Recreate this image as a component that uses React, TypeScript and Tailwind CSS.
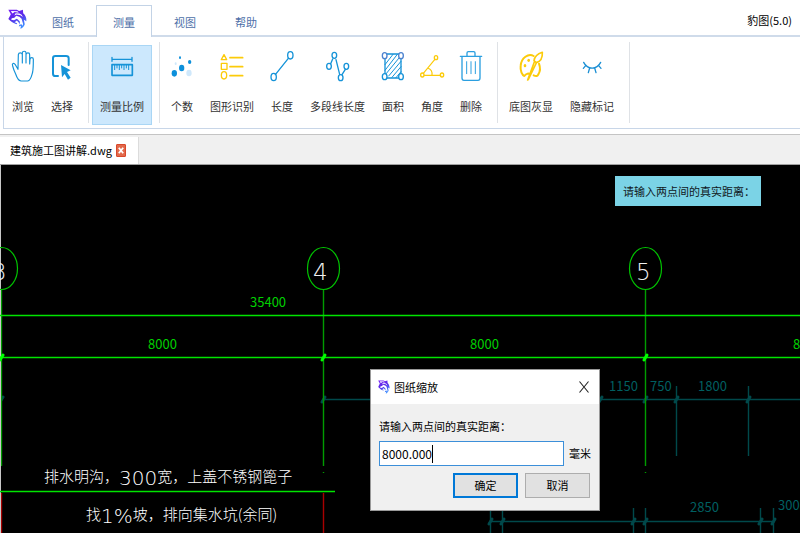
import { useState } from "react";
import type { ReactNode } from "react";

const BLUE = "#1593d8";
const YELLOW = "#fccb0a";

function Logo({ className }: { className: string }) {
  return (
    <svg viewBox="0 0 60 62" className={className} preserveAspectRatio="none" aria-hidden="true">
      <defs>
        <linearGradient id="fur" x1="0" y1="0" x2="0.4" y2="1">
          <stop offset="0" stopColor="#7a1cf5" />
          <stop offset="0.5" stopColor="#5a2be8" />
          <stop offset="1" stopColor="#3f8cff" />
        </linearGradient>
      </defs>
      <path
        fill="url(#fur)"
        fillRule="evenodd"
        d="M1 2 H28 L35 6 L47 2 L48 13 C55 19 59 27 58 38 L50 33 L53 47 C50 55 45 59 39 61 L41 52 L34 54 L36 49 L43 47 L45 52 C48 49 48 45 46 41 L43 30 L36 24 L26 21 L20 27 L12 29 L10 33 L19 35 L28 30 L37 38 L38 47 L33 41 L28 36 L21 41 L29 44 L27 47 L16 43 L9 38 L1 31 L9 16 Z M9 6 L14 14 L21 9 L34 12 L30 7 Z M24 13 L20 20 L27 17 L39 19 L47 25 L43 18 L36 14 Z"
      />
    </svg>
  );
}

function Icon({ children, stroke = BLUE }: { children: ReactNode; stroke?: string }) {
  return (
    <svg
      viewBox="0 0 84 108"
      className="-mx-1 h-9 w-7 shrink-0"
      fill="none"
      stroke={stroke}
      strokeWidth="4"
      strokeLinecap="round"
      strokeLinejoin="round"
      aria-hidden="true"
    >
      {children}
    </svg>
  );
}

const handIcon = (
  <Icon>
    <path
      d="M27 64 L19 50 C14 43 8 47 11 54 C14 66 17 72 20 78 C24 90 28 98 36 99 H56 C66 97 68 82 71 72 C73 62 73 50 73 34 C73 27 64 27 63 34 L62 48 V20 C62 13 52 13 51 20 V45 M51 20 V15 C51 8 40 8 40 15 V45 M40 20 C39 13 29 13 28 20 L27 64"
      strokeWidth="3.5"
    />
  </Icon>
);
const selectIcon = (
  <Icon>
    <path d="M30 84 H22 C17 84 15 81 15 77 V31 C15 26 17 24 22 24 H54 C59 24 62 26 62 31 V51" strokeWidth="6" />
    <path d="M39 51 L68 67 L57 72 L68 89 L60 95 L50 78 L42 88 Z" fill={BLUE} stroke="none" />
  </Icon>
);
const scaleIcon = (
  <Icon>
    <path d="M12 28 V40 M72 28 V40 M12 34 H72" strokeWidth="4" />
    <rect x="12" y="50" width="61" height="32" strokeWidth="5" />
    <path d="M20 51 V66 M27 51 V61 M34 51 V66 M41 51 V61 M48 51 V66 M55 51 V61 M62 51 V66" strokeWidth="3" strokeLinecap="butt" />
  </Icon>
);
const countIcon = (
  <Icon>
    <g stroke="none" fill="#0d90db">
      <ellipse cx="19" cy="76" rx="8" ry="10" />
      <ellipse cx="41" cy="60" rx="8" ry="10" />
      <ellipse cx="65" cy="42" rx="5" ry="6" />
      <ellipse cx="36" cy="29" rx="3" ry="4" />
      <ellipse cx="63" cy="75" rx="8" ry="10" fill="#cfe8fb" />
      <ellipse cx="23" cy="47" rx="3" ry="4" fill="#cfe8fb" />
    </g>
  </Icon>
);
const shapesIcon = (
  <Icon stroke={YELLOW}>
    <path d="M18 20 L26 35 H10 Z" strokeWidth="4" />
    <rect x="10" y="46" width="17" height="18" strokeWidth="4" />
    <ellipse cx="18" cy="82" rx="8" ry="11" strokeWidth="4" />
    <path d="M36 29 H74 M36 56 H74 M36 83 H74" strokeWidth="5" />
  </Icon>
);
const lengthIcon = (
  <Icon>
    <path d="M22 80 L61 31" />
    <ellipse cx="17" cy="87" rx="8" ry="11" />
    <ellipse cx="67" cy="22" rx="8" ry="11" />
  </Icon>
);
const polylineIcon = (
  <Icon>
    <path d="M20 47 L26 33 M36 35 L47 79 M54 80 L64 64" />
    <ellipse cx="15" cy="55" rx="7" ry="9" />
    <ellipse cx="31" cy="22" rx="7" ry="9" />
    <ellipse cx="50" cy="89" rx="7" ry="9" />
    <ellipse cx="67" cy="55" rx="7" ry="9" />
  </Icon>
);
const areaIcon = (
  <Icon>
    <path d="M24 18 H60 M66 31 V78 M60 90 H24 M18 78 V31" strokeWidth="4" />
    <path d="M18 50 L42 19 M18 67 L55 19 M19 80 L65 24 M29 84 L66 40 M39 88 L66 56 M51 89 L66 71" strokeWidth="3" />
    <ellipse cx="17" cy="86" rx="7" ry="9" fill="white" />
    <ellipse cx="66" cy="86" rx="7" ry="9" fill="white" />
    <ellipse cx="17" cy="23" rx="7" ry="9" fill="white" stroke="#4c82cf" />
    <ellipse cx="66" cy="23" rx="7" ry="9" fill="white" stroke="#4c82cf" />
  </Icon>
);
const angleIcon = (
  <Icon stroke={YELLOW}>
    <path d="M16 76 L50 35 M19 82 H68 M31 61 C40 65 43 72 42 81" strokeWidth="3.5" />
    <ellipse cx="13" cy="81" rx="5" ry="6" />
    <ellipse cx="54" cy="29" rx="5" ry="6" />
    <ellipse cx="72" cy="81" rx="5" ry="6" />
  </Icon>
);
const deleteIcon = (
  <Icon stroke="#2b9fe0">
    <path d="M10 25 H74 M30 24 V15 C30 12 32 11 34 11 H50 C52 11 54 12 54 15 V24 M15 26 V90 C15 95 17 97 21 97 H63 C67 97 69 95 69 90 V26" />
    <path d="M29 41 V77 M42 41 V77 M55 41 V77" strokeWidth="3" />
  </Icon>
);
const paletteIcon = (
  <Icon stroke={YELLOW}>
    <path d="M50 24 C34 15 13 29 11 53 C9 70 16 82 22 84 C28 75 36 76 38 79 M50 82 C58 86 62 84 64 79 C70 70 70 58 66 47" strokeWidth="6" />
    <path d="M76 13 C61 18 53 24 51 38 L58 44 C72 40 77 30 76 13 Z" strokeWidth="5" />
    <path d="M52 42 L32 96 M58 45 L34 94" strokeWidth="5" />
    <g fill={YELLOW} stroke="none">
      <ellipse cx="35" cy="37" rx="4" ry="5" />
      <ellipse cx="24" cy="53" rx="4" ry="5" />
    </g>
  </Icon>
);
const hiddenIcon = (
  <Icon stroke="#1b8fd4">
    <path d="M17 43 C29 66 56 66 68 43 M23 53 L16 61 M35 60 L31 74 M50 60 L54 74 M62 53 L69 61" strokeWidth="4" />
  </Icon>
);

type Tool = { label: string; icon: ReactNode };
const groups: Tool[][] = [
  [
    { label: "浏览", icon: handIcon },
    { label: "选择", icon: selectIcon },
  ],
  [{ label: "测量比例", icon: scaleIcon }],
  [
    { label: "个数", icon: countIcon },
    { label: "图形识别", icon: shapesIcon },
    { label: "长度", icon: lengthIcon },
    { label: "多段线长度", icon: polylineIcon },
    { label: "面积", icon: areaIcon },
    { label: "角度", icon: angleIcon },
    { label: "删除", icon: deleteIcon },
  ],
  [
    { label: "底图灰显", icon: paletteIcon },
    { label: "隐藏标记", icon: hiddenIcon },
  ],
];

function ToolButton({ label, icon }: Tool) {
  const active = label === "测量比例";
  return (
    <button
      type="button"
      aria-pressed={active}
      className={`flex h-20 flex-col items-center px-2 pt-[3px] text-[#333] ${
        active ? "bg-[#cce8fd] outline outline-1 -outline-offset-1 outline-[#a9d6f5]" : ""
      }`}
    >
      {icon}
      <span className="mt-3.5 whitespace-nowrap leading-4">{label}</span>
    </button>
  );
}

function Tick({ x, y, color }: { x: number; y: number; color: string }) {
  return <path d={`M${x - 1} ${y + 3} L${x + 2} ${y - 2}`} stroke={color} strokeWidth="3" strokeLinecap="round" />;
}

function Drawing() {
  const teal = "#00494b";
  return (
    <svg className="absolute inset-0 h-full w-full" fill="none" aria-label="建筑施工图讲解">
      <g stroke={teal} strokeWidth="1.4">
        <line x1="324" y1="234.5" x2="100%" y2="234.5" />
        <line x1="490" y1="356.5" x2="775" y2="356.5" />
        <path d="M676.5 221 V291 M748.5 221 V291" />
        <path d="M490.5 343 V368 M502.5 343 V368 M633.5 343 V368 M645.5 343 V368 M760.5 343 V368 M773.5 343 V368" />
      </g>
      {[1, 323, 600, 645, 676, 748].map((x) => (
        <Tick key={x} x={x} y={234} color={teal} />
      ))}
      {[490, 502, 633, 645, 760, 773].map((x) => (
        <Tick key={x} x={x} y={356} color={teal} />
      ))}
      <g stroke="#009c00" strokeWidth="1.4">
        <path d="M1.5 125 V301 M323.5 125 V301 M645.5 125 V301" />
        <path d="M323.5 307 V310 M645.5 307 V310" strokeDasharray="1 2" />
      </g>
      <path d="M323.5 328 V368 M1.5 328 V368" stroke="#a80000" strokeWidth="1.4" />
      <rect width="1" height="100%" fill="#c8c8c8" />
      <g stroke="#00e400" strokeWidth="1.4">
        <line x1="0" y1="150.5" x2="100%" y2="150.5" />
        <line x1="0" y1="192.5" x2="100%" y2="192.5" />
        <line x1="0" y1="326.5" x2="335" y2="326.5" />
      </g>
      {[1, 323, 645].map((x) => (
        <g key={x}>
          <ellipse cx={x + 0.5} cy="103.5" rx="16" ry="21" stroke="#00c400" strokeWidth="1.2" />
          <Tick x={x} y={192} color="#00ff00" />
        </g>
      ))}
      <g fill="#00d000" className="font-['Noto_Sans_CJK_SC',sans-serif] text-[13px]">
        <text x="250" y="142">35400</text>
        <text x="148" y="184">8000</text>
        <text x="470" y="184">8000</text>
        <text x="793" y="184">8000</text>
      </g>
      <g fill="#005f61" className="font-['Noto_Sans_CJK_SC',sans-serif] text-[13px]">
        <text x="609" y="226">1150</text>
        <text x="650" y="226">750</text>
        <text x="698" y="226">1800</text>
        <text x="690" y="347">2850</text>
        <text x="778" y="345">300</text>
      </g>
      <g fill="#f0f0f0" className="font-['DejaVu_Sans','Noto_Sans_CJK_SC',sans-serif] text-[23px] font-extralight">
        <text x="-8" y="115">3</text>
        <text x="313" y="115">4</text>
        <text x="636" y="115">5</text>
      </g>
      <g fill="#ffffff" className="font-['Noto_Sans_CJK_SC',sans-serif] text-[15px] font-light">
        <text x="44" y="317">
          排水明沟，
          <tspan dy="3" className="font-['DejaVu_Sans',sans-serif] text-[20px] font-extralight">300</tspan>
          <tspan dy="-3">宽，上盖不锈钢篦子</tspan>
        </text>
        <text x="86" y="355">
          找
          <tspan dy="3" className="font-['DejaVu_Sans',sans-serif] text-[20px] font-extralight">1%</tspan>
          <tspan dy="-3">坡，排向集水坑(余同)</tspan>
        </text>
      </g>
    </svg>
  );
}

function ScaleDialog() {
  const [distance, setDistance] = useState("8000.000");
  return (
    <form
      role="dialog"
      aria-labelledby="dialog-title"
      className="absolute left-[370px] top-[204px] w-[230px] border border-[#999] bg-[#f0f0f0] text-black"
    >
      <div className="flex h-[34px] items-center bg-white pl-[7px] pr-2.5">
        <Logo className="mr-1 h-3.5 w-3" />
        <h2 id="dialog-title">图纸缩放</h2>
        <button type="button" aria-label="关闭" className="ml-auto">
          <svg viewBox="0 0 10 12" className="h-3 w-2.5" stroke="#222" strokeWidth="1.1" aria-hidden="true">
            <path d="M0.5 0.5 L9.5 11.5 M9.5 0.5 L0.5 11.5" />
          </svg>
        </button>
      </div>
      <div className="px-2 pb-3 pt-3.5">
        <label htmlFor="distance" className="block leading-4">
          请输入两点间的真实距离：
        </label>
        <div className="mt-[7px] flex items-center gap-[5px]">
          <span className="flex h-[25px] min-w-0 flex-1 items-center border border-[#3c8fd9] bg-white px-0.5">
            <input
              id="distance"
              value={distance}
              size={7}
              onChange={(e) => setDistance(e.target.value)}
              className="w-[50px] text-[12px] leading-4 outline-none"
            />
            <i className="h-[18px] w-px bg-black" />
          </span>
          <span>毫米</span>
        </div>
        <div className="mr-px mt-[7px] flex justify-end gap-[7px]">
          <button type="button" className="h-[25px] w-[65px] border-2 border-[#0078d7] bg-[#e1e1e1]">
            确定
          </button>
          <button type="button" className="h-[25px] w-[65px] border border-[#adadad] bg-[#e1e1e1]">
            取消
          </button>
        </div>
      </div>
    </form>
  );
}

export default function App() {
  return (
    <div className="flex min-h-screen flex-col overflow-hidden bg-white font-['Noto_Sans_CJK_SC','Noto_Sans',sans-serif] text-[11px]">
      <header className="flex h-[37px] items-end border-b-2 border-[#cfdbea] pl-2">
        <Logo className="mb-1.5 h-5 w-[19px]" />
        <nav className="-mb-0.5 ml-2 flex gap-[5px] text-[#4d6fa8]">
          {["图纸", "测量", "视图", "帮助"].map((name) => (
            <button
              key={name}
              type="button"
              className={`h-8 w-14 border-t pt-px ${
                name === "测量" ? "border-x border-[#c3d3e6] bg-white" : "border-transparent"
              }`}
            >
              {name}
            </button>
          ))}
        </nav>
        <h1 className="mb-[7px] ml-auto mr-2 text-black">豹图(5.0)</h1>
      </header>

      <section aria-label="测量" className="ml-[3px] flex h-[92px] items-start border-b border-l border-[#c8d6e8] pt-[5px]">
        {groups.map((tools) => (
          <div key={tools[0].label} className="flex">
            <div className="mt-[3px] flex gap-px">
              {tools.map((tool) => (
                <ToolButton key={tool.label} {...tool} />
              ))}
            </div>
            <div className="ml-[7px] mr-[3px] h-[81px] w-px bg-[#dfe2e6]" />
          </div>
        ))}
      </section>

      <div className="mt-[5px] flex h-[31px] items-end border-b border-t border-b-[#a0a0a0] border-t-[#c4c4c4] bg-[#f0f0f0]">
        <div className="flex h-[27px] items-center gap-1 border-r border-[#dcdcdc] bg-white pl-2.5 pr-3 text-black">
          <span>建筑施工图讲解.dwg</span>
          <button type="button" aria-label="关闭图纸" className="flex h-[13px] w-2.5 items-center justify-center rounded-[1px] border border-[#d9482b] bg-[#e2694b]">
            <svg viewBox="0 0 6 7" className="h-[7px] w-1.5" stroke="white" strokeWidth="1.8" aria-hidden="true">
              <path d="M0.8 0.8 L5.2 6.2 M5.2 0.8 L0.8 6.2" />
            </svg>
          </button>
        </div>
      </div>

      <main className="relative min-h-[368px] flex-1 overflow-hidden bg-black">
        <Drawing />
        <p role="status" className="absolute right-[39px] top-[11px] bg-[#7bd3e6] py-[7px] pl-2 pr-1.5 leading-4 text-[#10181c]">
          请输入两点间的真实距离：
        </p>
        <ScaleDialog />
      </main>
    </div>
  );
}
